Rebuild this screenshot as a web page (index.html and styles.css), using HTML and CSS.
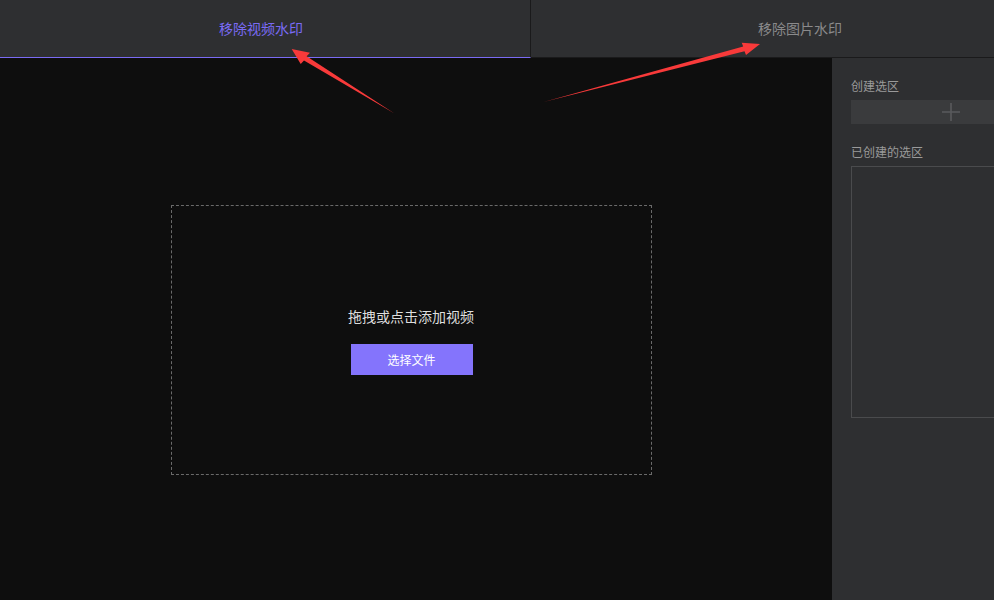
FILE: index.html
```html
<!DOCTYPE html>
<html lang="zh-CN">
<head>
<meta charset="utf-8">
<link rel="stylesheet" href="styles.css">
</head>
<body>
<div class="app">
  <div class="tabs">
    <div class="tab active">移除视频水印</div>
    <div class="tab second">移除图片水印</div>
  </div>
  <div class="content">
    <div class="main">
      <div class="drop">
        <div class="drop-text">拖拽或点击添加视频</div>
        <button class="btn">选择文件</button>
      </div>
    </div>
    <div class="panel">
      <div class="label">创建选区</div>
      <div class="add">
        <svg width="20" height="20" viewBox="0 0 20 20"><path d="M10 1v18M1 10h18" stroke="#5a5b5d" stroke-width="1.6" fill="none"/></svg>
      </div>
      <div class="label label2">已创建的选区</div>
      <div class="list"></div>
    </div>
  </div>
  <svg class="arrows" width="994" height="600" viewBox="0 0 994 600">
    <polygon points="394.5,113.5 306.6,56.3 310,52.7 291.7,49 300.7,64 304,60.5" fill="#f83a3a"/>
    <polygon points="543.5,102 743.2,46.5 741.7,42.7 760,44 746,55 744.5,51.3" fill="#f83a3a"/>
  </svg>
</div>
</body>
</html>
```
FILE: styles.css
```css
html, body {
  margin: 0;
  padding: 0;
  width: 994px;
  height: 600px;
  overflow: hidden;
  background: #0e0e0e;
  font-family: "Noto Sans CJK SC", "Noto Sans", sans-serif;
}
.app {
  position: relative;
  width: 994px;
  height: 600px;
  overflow: hidden;
}
.tabs {
  display: flex;
  height: 57px;
  border-bottom: 1px solid #1a1a1b;
  background: #2e2f31;
}
.tab {
  display: flex;
  align-items: center;
  justify-content: center;
  font-size: 14px;
  color: #8a8a8b;
  box-sizing: border-box;
  padding-bottom: 1px;
}
.tab.active {
  flex: 0 0 531px;
  color: #7a6bf4;
  border-right: 1px solid #1a1a1b;
  border-bottom: 1px solid #7a6bf4;
  padding-right: 8px;
  margin-bottom: -1px;
}
.tab.second {
  flex: 1 1 auto;
  padding-left: 75px;
}
.content {
  display: flex;
  height: 542px;
}
.main {
  flex: 0 0 832px;
  background: #0e0e0e;
  padding: 147px 0 0 171px;
  box-sizing: border-box;
}
.drop {
  width: 481px;
  height: 270px;
  box-sizing: border-box;
  border: 1px dashed #6a6a6a;
  display: flex;
  flex-direction: column;
  align-items: center;
  padding-top: 100px;
}
.drop-text {
  font-size: 14px;
  line-height: 20px;
  color: #dedede;
  margin-right: 1px;
}
.btn {
  margin-top: 18px;
  width: 122px;
  height: 31px;
  border: none;
  background: #8474fc;
  color: #ffffff;
  font-family: inherit;
  font-size: 12px;
  padding: 0;
}
.panel {
  flex: 1 1 auto;
  min-width: 0;
  overflow: hidden;
  background: #2e2f31;
  padding: 20px 0 0 19px;
  box-sizing: border-box;
}
.label {
  font-size: 12px;
  line-height: 16px;
  color: #9a9a9a;
}
.add {
  margin-top: 6px;
  height: 24px;
  background: #3a3b3d;
  display: flex;
  align-items: center;
  padding-left: 90px;
}
.label2 {
  margin-top: 20px;
}
.list {
  margin-top: 6px;
  height: 252px;
  box-sizing: border-box;
  border: 1px solid #4a4b4d;
  border-right: none;
}
.arrows {
  position: absolute;
  left: 0;
  top: 0;
  pointer-events: none;
}
```
